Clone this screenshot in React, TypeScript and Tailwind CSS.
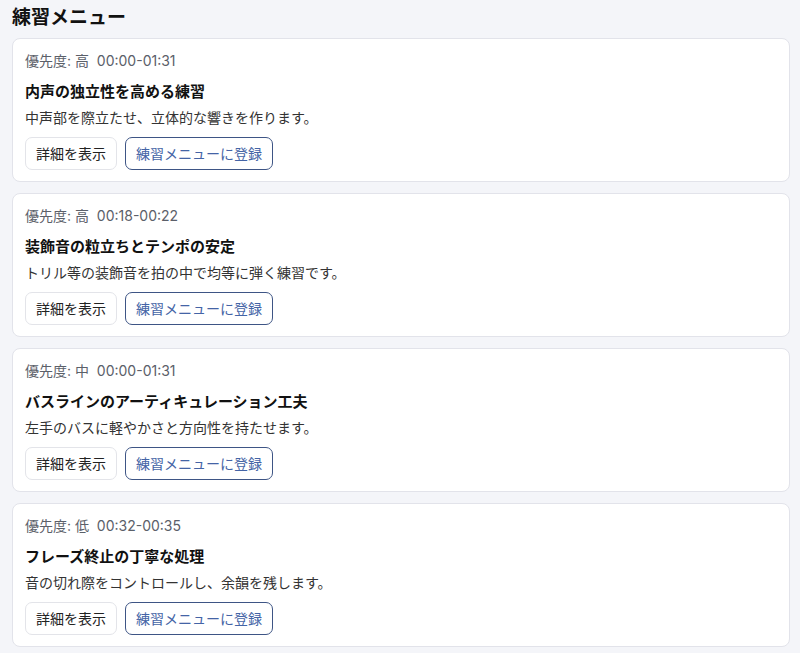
import React from "react";

const items = [
  { meta: "優先度: 高  00:00-01:31", title: "内声の独立性を高める練習", desc: "中声部を際立たせ、立体的な響きを作ります。" },
  { meta: "優先度: 高  00:18-00:22", title: "装飾音の粒立ちとテンポの安定", desc: "トリル等の装飾音を拍の中で均等に弾く練習です。" },
  { meta: "優先度: 中  00:00-01:31", title: "バスラインのアーティキュレーション工夫", desc: "左手のバスに軽やかさと方向性を持たせます。" },
  { meta: "優先度: 低  00:32-00:35", title: "フレーズ終止の丁寧な処理", desc: "音の切れ際をコントロールし、余韻を残します。" },
];

export default function App() {
  return (
    <div
      className="min-h-[653px] bg-[#f4f5f9] pl-3 pr-[10px] pt-1 pb-3"
      style={{ fontFamily: 'Inter, "Noto Sans CJK JP", sans-serif' }}
    >
      <h2 className="text-[19px] leading-7 font-bold text-[#111] mb-[6px]">練習メニュー</h2>
      <div className="flex flex-col gap-[11px]">
        {items.map((it, i) => (
          <div key={i} className="bg-white border border-[#e2e3ea] rounded-lg px-3 pt-3 pb-[11px]">
            <div className="text-[14px] leading-5 text-[#5b6069] whitespace-pre">{it.meta}</div>
            <div className="mt-[10px] text-[15px] leading-[22px] font-bold text-[#111]">{it.title}</div>
            <div className="mt-[5px] text-[14px] leading-5 text-[#333]">{it.desc}</div>
            <div className="mt-[9px] flex gap-2">
              <button className="h-[33px] px-[10px] border border-[#e3e4e9] rounded-[7px] bg-white text-[14px] text-[#222]">
                詳細を表示
              </button>
              <button className="h-[33px] px-[10px] border border-[#3e5585] rounded-[7px] bg-white text-[14px] text-[#4464a6]">
                練習メニューに登録
              </button>
            </div>
          </div>
        ))}
      </div>
    </div>
  );
}
